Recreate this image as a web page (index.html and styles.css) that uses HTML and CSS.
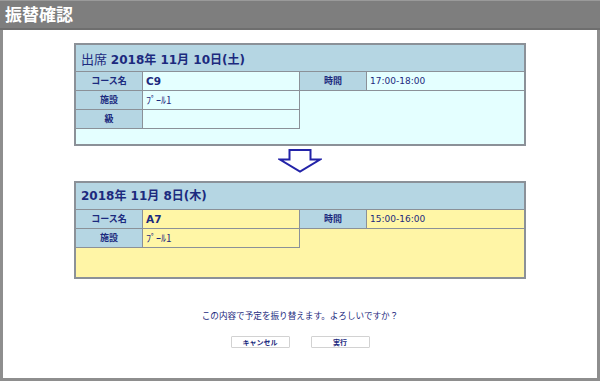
FILE: index.html
```html
<!DOCTYPE html>
<html lang="ja">

<head>
    <meta charset="UTF-8">
    <title>振替確認</title>
    <link rel="stylesheet" href="styles.css">
</head>

<body>

    <div class="window">
        <div class="title-bar">振替確認</div>

        <div class="content">
            <!-- current lesson -->
            <div class="card card-from">
                <div class="card-head"><span class="head-label">出席</span> <b>2018年 11月 10日(土)</b></div>
                <div class="card-body">
                    <div class="col-left">
                        <div class="row">
                            <div class="label">コース名</div>
                            <div class="value strong">C9</div>
                        </div>
                        <div class="row">
                            <div class="label">施設</div>
                            <div class="value small">ﾌﾟｰﾙ1</div>
                        </div>
                        <div class="row">
                            <div class="label">級</div>
                            <div class="value"></div>
                        </div>
                    </div>
                    <div class="col-right">
                        <div class="row">
                            <div class="label">時間</div>
                            <div class="value">17:00-18:00</div>
                        </div>
                    </div>
                </div>
            </div>

            <div class="arrow">
                <svg width="44" height="24" viewBox="0 0 44 24">
                    <path d="M11.5 1 H32.5 V10.5 H42 L22 22.5 L2 10.5 H11.5 Z" fill="none" stroke="#2323a8" stroke-width="2" stroke-linejoin="miter" />
                </svg>
            </div>

            <!-- new lesson -->
            <div class="card card-to">
                <div class="card-head"><b>2018年 11月 8日(木)</b></div>
                <div class="card-body">
                    <div class="col-left">
                        <div class="row">
                            <div class="label">コース名</div>
                            <div class="value strong">A7</div>
                        </div>
                        <div class="row">
                            <div class="label">施設</div>
                            <div class="value small">ﾌﾟｰﾙ1</div>
                        </div>
                    </div>
                    <div class="col-right">
                        <div class="row">
                            <div class="label">時間</div>
                            <div class="value">15:00-16:00</div>
                        </div>
                    </div>
                </div>
            </div>

            <p class="message">この内容で予定を振り替えます。よろしいですか？</p>

            <div class="buttons">
                <button class="btn">キャンセル</button>
                <button class="btn">実行</button>
            </div>
        </div>
    </div>

</body>

</html>
```

FILE: styles.css
```css
body {
    margin: 0;
    padding: 0;
    font-family: "DejaVu Sans", "Noto Sans CJK JP", sans-serif;
    color: #1c2a7e;
}

.window {
    width: 600px;
    height: 381px;
    box-sizing: border-box;
    border: 3px solid #8e8e8e;
    border-top: 0;
    background: #fff;
    display: flex;
    flex-direction: column;
}

.title-bar {
    height: 27px;
    margin: 0 -3px;
    padding-left: 5px;
    background: #7e7e7e;
    border-top: 1px solid #9a9a9a;
    border-bottom: 2px solid #6e6e6e;
    color: #fff;
    font-family: "Noto Sans CJK JP", sans-serif;
    font-weight: bold;
    font-size: 17px;
    line-height: 25px;
}

.content {
    flex: 1;
    display: flex;
    flex-direction: column;
    align-items: center;
    padding-top: 13px;
}

.card {
    width: 452px;
    box-sizing: border-box;
    border: 2px solid #8b9198;
    display: flex;
    flex-direction: column;
}

.card-from {
    height: 103px;
    background: #e4ffff;
}

.card-to {
    height: 98px;
    background: #fff5a6;
}

.card-head {
    height: 26px;
    border-bottom: 1px solid #8b9198;
    background: #b5d6e3;
    padding-left: 5px;
    font-size: 12px;
    line-height: 27px;
    font-family: "DejaVu Sans", "Noto Sans CJK JP", sans-serif;
}

.head-label {
    font-family: "Noto Sans CJK JP", sans-serif;
    font-size: 13px;
}

.card-body {
    display: flex;
}

.col-left {
    width: 224px;
}

.col-right {
    flex: 1;
}

.row {
    display: flex;
    height: 18px;
    border-bottom: 1px solid #8b9198;
}

.col-left .row {
    border-right: 1px solid #8b9198;
}

.label {
    width: 66px;
    flex: none;
    border-right: 1px solid #8b9198;
    background: #b5d6e3;
    text-align: center;
    font-family: "Noto Sans CJK JP", sans-serif;
    font-weight: bold;
    font-size: 9px;
    line-height: 18px;
}

.value {
    flex: 1;
    padding-left: 3px;
    font-size: 9px;
    line-height: 18px;
}

.card-from .value {
    background: #e4ffff;
}

.card-to .value {
    background: #fff6a6;
}

.value.strong {
    font-weight: bold;
    font-size: 10.5px;
}

.value.small {
    font-family: "Noto Sans CJK JP", sans-serif;
    font-size: 10px;
}

.arrow {
    height: 35px;
    display: flex;
    justify-content: center;
    padding-top: 3px;
    box-sizing: border-box;
}

.message {
    margin: 30px 0 0;
    font-family: "Noto Sans CJK JP", sans-serif;
    font-size: 8.6px;
    line-height: 12px;
}

.buttons {
    display: flex;
    gap: 21px;
    margin-top: 15px;
}

.btn {
    width: 59px;
    height: 12px;
    padding: 0;
    border: 1px solid #d2d2d2;
    border-radius: 1px;
    background: #fff;
    color: #1c2a7e;
    font-family: "Noto Sans CJK JP", sans-serif;
    font-weight: bold;
    font-size: 7px;
    line-height: 10px;
}
```
